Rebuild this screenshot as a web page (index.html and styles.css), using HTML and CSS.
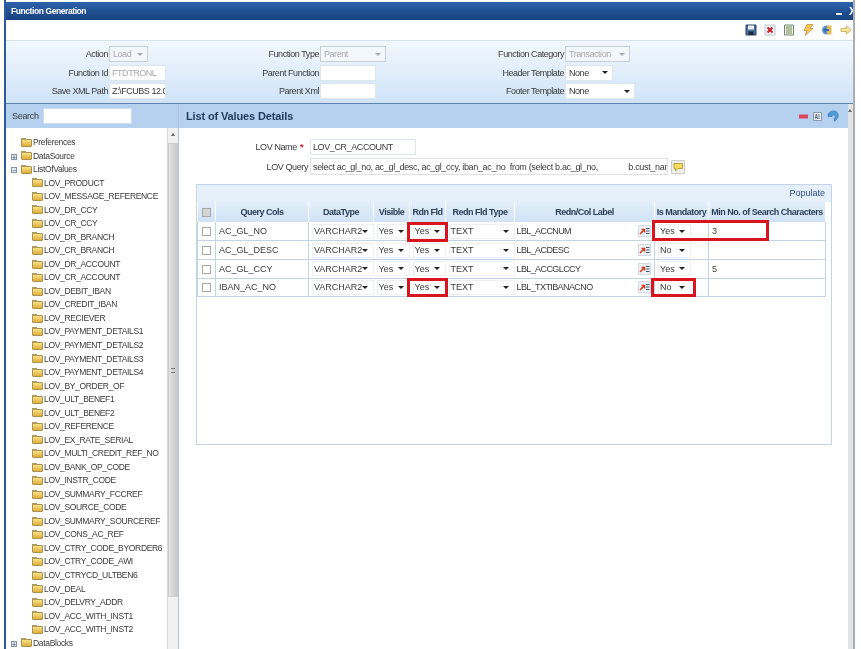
FILE: index.html
```html
<!DOCTYPE html>
<html lang="en">
<head>
  <meta charset="UTF-8" />
  <title>Function Generation</title>
  <link rel="stylesheet" href="styles.css">
</head>
<body>
  <div class="ventana">
    <div class="titulo">
      <span>Function Generation</span>
      <span class="titulo-btns"><i class="min"></i><b>X</b></span>
    </div>

    <div class="toolbar">
      <svg viewBox="0 0 12 12"><path d="M1 1h10v10H1z" fill="#4a6f9c" stroke="#2b4464"/><path d="M3 1.500h6v4H3z" fill="#e8eef5"/><path d="M3.500 7.500h5v3.500h-5z" fill="#1d2a3a"/></svg>
      <svg viewBox="0 0 12 12"><path d="M1 1h10v10H1z" fill="#f3f3f3" stroke="#b9c4d0"/><path d="M3.500 3.500l5 5m0-5l-5 5" stroke="#c8202c" stroke-width="2"/></svg>
      <svg viewBox="0 0 12 12"><path d="M1.500 1h9v10h-9z" fill="#eef2e2" stroke="#6f8a78"/><path d="M3 3h6M3 5h6M3 7h6M3 9h6" stroke="#7a8c50"/></svg>
      <svg viewBox="0 0 12 12"><path d="M5 0.500h6L8 4.500h3L3 11.500l2-5H2z" fill="#f4c65a" stroke="#b8862a" stroke-width=".7"/></svg>
      <svg viewBox="0 0 12 12"><circle cx="5.500" cy="6" r="4.500" fill="#5f93cf"/><path d="M6 1.500h4.500v9H6z" fill="#e6b94f"/><path d="M2 6l3-2.500v1.500h3v2H5v1.500z" fill="#2f6cb5"/></svg>
      <svg viewBox="0 0 12 12"><path d="M1 4.500h5.500V2L11 6l-4.500 4V7.500H1z" fill="#f6e7a0" stroke="#c9a94a" stroke-width=".8"/></svg>
    </div>

    <div class="cabecera">
      <label>Action</label><div class="sel off s-39"><span>Load</span></div>
      <label>Function Type</label><div class="sel off s-66"><span>Parent</span></div>
      <label>Function Category</label><div class="sel off s-65"><span>Transaction</span></div>

      <label>Function Id</label><div class="campo off">FTDTRONL</div>
      <label>Parent Function</label><div class="campo s-56"></div>
      <label>Header Template</label><div class="sel s-48"><span>None</span></div>

      <label>Save XML Path</label><div class="campo">Z:\FCUBS 12.0</div>
      <label>Parent Xml</label><div class="campo s-56"></div>
      <label>Footer Template</label><div class="sel s-70"><span>None</span></div>
    </div>

    <div class="cuerpo">
      <div class="lateral">
        <div class="buscar">Search <div class="campo buscar-campo"></div></div>
        <div class="arbol-wrap">
          <div class="arbol">
            <div class="nodo"><i class="carpeta"></i>Preferences</div>
            <div class="nodo"><i class="exp">+</i><i class="carpeta"></i>DataSource</div>
            <div class="nodo"><i class="exp">−</i><i class="carpeta"></i>ListOfValues</div>
            <div class="hoja"><i class="carpeta"></i>LOV_PRODUCT</div>
            <div class="hoja"><i class="carpeta"></i>LOV_MESSAGE_REFERENCE</div>
            <div class="hoja"><i class="carpeta"></i>LOV_DR_CCY</div>
            <div class="hoja"><i class="carpeta"></i>LOV_CR_CCY</div>
            <div class="hoja"><i class="carpeta"></i>LOV_DR_BRANCH</div>
            <div class="hoja"><i class="carpeta"></i>LOV_CR_BRANCH</div>
            <div class="hoja"><i class="carpeta"></i>LOV_DR_ACCOUNT</div>
            <div class="hoja"><i class="carpeta"></i>LOV_CR_ACCOUNT</div>
            <div class="hoja"><i class="carpeta"></i>LOV_DEBIT_IBAN</div>
            <div class="hoja"><i class="carpeta"></i>LOV_CREDIT_IBAN</div>
            <div class="hoja"><i class="carpeta"></i>LOV_RECIEVER</div>
            <div class="hoja"><i class="carpeta"></i>LOV_PAYMENT_DETAILS1</div>
            <div class="hoja"><i class="carpeta"></i>LOV_PAYMENT_DETAILS2</div>
            <div class="hoja"><i class="carpeta"></i>LOV_PAYMENT_DETAILS3</div>
            <div class="hoja"><i class="carpeta"></i>LOV_PAYMENT_DETAILS4</div>
            <div class="hoja"><i class="carpeta"></i>LOV_BY_ORDER_OF</div>
            <div class="hoja"><i class="carpeta"></i>LOV_ULT_BENEF1</div>
            <div class="hoja"><i class="carpeta"></i>LOV_ULT_BENEF2</div>
            <div class="hoja"><i class="carpeta"></i>LOV_REFERENCE</div>
            <div class="hoja"><i class="carpeta"></i>LOV_EX_RATE_SERIAL</div>
            <div class="hoja"><i class="carpeta"></i>LOV_MULTI_CREDIT_REF_NO</div>
            <div class="hoja"><i class="carpeta"></i>LOV_BANK_OP_CODE</div>
            <div class="hoja"><i class="carpeta"></i>LOV_INSTR_CODE</div>
            <div class="hoja"><i class="carpeta"></i>LOV_SUMMARY_FCCREF</div>
            <div class="hoja"><i class="carpeta"></i>LOV_SOURCE_CODE</div>
            <div class="hoja"><i class="carpeta"></i>LOV_SUMMARY_SOURCEREF</div>
            <div class="hoja"><i class="carpeta"></i>LOV_CONS_AC_REF</div>
            <div class="hoja"><i class="carpeta"></i>LOV_CTRY_CODE_BYORDER6</div>
            <div class="hoja"><i class="carpeta"></i>LOV_CTRY_CODE_AWI</div>
            <div class="hoja"><i class="carpeta"></i>LOV_CTRYCD_ULTBEN6</div>
            <div class="hoja"><i class="carpeta"></i>LOV_DEAL</div>
            <div class="hoja"><i class="carpeta"></i>LOV_DELVRY_ADDR</div>
            <div class="hoja"><i class="carpeta"></i>LOV_ACC_WITH_INST1</div>
            <div class="hoja"><i class="carpeta"></i>LOV_ACC_WITH_INST2</div>
            <div class="nodo"><i class="exp">+</i><i class="carpeta"></i>DataBlocks</div>
          </div>
          <div class="scroll">
            <div class="flecha"></div>
            <div class="thumb"><span></span></div>
          </div>
        </div>
      </div>

      <div class="principal">
        <div class="contenido">
          <div class="banda">
            <h2>List of Values Details</h2>
            <div class="banda-iconos">
              <svg width="9" height="5" viewBox="0 0 9 5"><path d="M0 0.500h9v4H0z" fill="#d8485a"/></svg>
              <svg width="9" height="9" viewBox="0 0 9 9"><path d="M.5.500h8v8h-8z" fill="#eef3f8" stroke="#8a98a8"/><path d="M2 7l1.300-5L4.600 7M2.500 5.500h1.600M6 2v5" fill="none" stroke="#47586c" stroke-width=".8"/></svg>
              <svg width="12" height="12" viewBox="0 0 12 12"><path d="M1 4.500C2 1.500 6 0 9 1.500c2.500 1.500 3 5 1 7.500L7.500 11.500 7 8.500c1.200-.8 1.500-2.500.5-3.300C6.500 4.500 5.500 5 5 6.500H1z" fill="#4f9ad8" stroke="#2a6aa8" stroke-width=".5"/></svg>
            </div>
          </div>

          <div class="detalle">
            <div class="fila-lov">
              <label>LOV Name <b>*</b></label>
              <div class="campo s-106">LOV_CR_ACCOUNT</div>
            </div>
            <div class="fila-lov">
              <label>LOV Query</label>
              <div class="campo consulta">select ac_gl_no, ac_gl_desc, ac_gl_ccy, iban_ac_no&nbsp; from (select b.ac_gl_no,&nbsp;&nbsp;&nbsp;&nbsp;&nbsp;&nbsp;&nbsp;&nbsp;&nbsp;&nbsp;&nbsp;&nbsp;&nbsp;&nbsp;b.cust_name</div>
              <svg class="globo" width="14" height="14" viewBox="0 0 14 14"><path d="M.5.500h13v13H.5z" fill="#f0f0e8" stroke="#ccc"/><path d="M3 3.500h8.500v5H7L4.500 11V8.500H3z" fill="#f7dc5c" stroke="#a8902c" stroke-width=".8"/></svg>
            </div>

            <div class="panel">
              <div class="panel-top"><a>Populate</a></div>
              <div class="tabla-wrap">
                <table class="tabla">
                  <thead>
                    <tr>
                      <th class="c-check"><i class="check gris"></i></th>
                      <th class="c-cols">Query Cols</th>
                      <th class="c-tipo">DataType</th>
                      <th class="c-vis">Visible</th>
                      <th class="c-rdn">Rdn Fld</th>
                      <th class="c-rtipo">Redn Fld Type</th>
                      <th class="c-label">Redn/Col Label</th>
                      <th class="c-man">Is Mandatory</th>
                      <th class="c-min">Min No. of Search Characters</th>
                    </tr>
                  </thead>
                  <tbody>
                    <tr>
                      <td><i class="check"></i></td>
                      <td>AC_GL_NO</td>
                      <td><div class="sel plano"><span>VARCHAR2</span></div></td>
                      <td><div class="sel plano"><span>Yes</span></div></td>
                      <td><div class="sel plano"><span>Yes</span></div></td>
                      <td><div class="sel plano"><span>TEXT</span></div></td>
                      <td><div class="etiqueta">LBL_ACCNUM<svg class="lista" viewBox="0 0 13 12"><path d="M.5.500h12v11H.5z" fill="#eef1f5" stroke="#d3d9e0"/><path d="M2 9l3.500-3.500M3.500 4.500h3v3" fill="none" stroke="#d23a1e" stroke-width="1.500"/><path d="M8 3.500h3.500M8 6h3.500M8 8.500h3.500" stroke="#3a5878"/></svg></div></td>
                      <td><div class="sel plano s-33"><span>Yes</span></div></td>
                      <td>3</td>
                    </tr>
                    <tr>
                      <td><i class="check"></i></td>
                      <td>AC_GL_DESC</td>
                      <td><div class="sel plano"><span>VARCHAR2</span></div></td>
                      <td><div class="sel plano"><span>Yes</span></div></td>
                      <td><div class="sel plano"><span>Yes</span></div></td>
                      <td><div class="sel plano"><span>TEXT</span></div></td>
                      <td><div class="etiqueta">LBL_ACDESC<svg class="lista" viewBox="0 0 13 12"><path d="M.5.500h12v11H.5z" fill="#eef1f5" stroke="#d3d9e0"/><path d="M2 9l3.500-3.500M3.500 4.500h3v3" fill="none" stroke="#d23a1e" stroke-width="1.500"/><path d="M8 3.500h3.500M8 6h3.500M8 8.500h3.500" stroke="#3a5878"/></svg></div></td>
                      <td><div class="sel plano s-33"><span>No</span></div></td>
                      <td></td>
                    </tr>
                    <tr>
                      <td><i class="check"></i></td>
                      <td>AC_GL_CCY</td>
                      <td><div class="sel plano"><span>VARCHAR2</span></div></td>
                      <td><div class="sel plano"><span>Yes</span></div></td>
                      <td><div class="sel plano"><span>Yes</span></div></td>
                      <td><div class="sel plano"><span>TEXT</span></div></td>
                      <td><div class="etiqueta">LBL_ACCGLCCY<svg class="lista" viewBox="0 0 13 12"><path d="M.5.500h12v11H.5z" fill="#eef1f5" stroke="#d3d9e0"/><path d="M2 9l3.500-3.500M3.500 4.500h3v3" fill="none" stroke="#d23a1e" stroke-width="1.500"/><path d="M8 3.500h3.500M8 6h3.500M8 8.500h3.500" stroke="#3a5878"/></svg></div></td>
                      <td><div class="sel plano s-33"><span>Yes</span></div></td>
                      <td>5</td>
                    </tr>
                    <tr>
                      <td><i class="check"></i></td>
                      <td>IBAN_AC_NO</td>
                      <td><div class="sel plano"><span>VARCHAR2</span></div></td>
                      <td><div class="sel plano"><span>Yes</span></div></td>
                      <td><div class="sel plano"><span>Yes</span></div></td>
                      <td><div class="sel plano"><span>TEXT</span></div></td>
                      <td><div class="etiqueta">LBL_TXTIBANACNO<svg class="lista" viewBox="0 0 13 12"><path d="M.5.500h12v11H.5z" fill="#eef1f5" stroke="#d3d9e0"/><path d="M2 9l3.500-3.500M3.500 4.500h3v3" fill="none" stroke="#d23a1e" stroke-width="1.500"/><path d="M8 3.500h3.500M8 6h3.500M8 8.500h3.500" stroke="#3a5878"/></svg></div></td>
                      <td><div class="sel plano s-33"><span>No</span></div></td>
                      <td></td>
                    </tr>
                  </tbody>
                </table>
                <div class="marca m-rdn1"></div>
                <div class="marca m-rdn2"></div>
                <div class="marca m-man1"></div>
                <div class="marca m-man2"></div>
              </div>
            </div>
          </div>
        </div>
        <div class="scroll-der"><div class="flecha"></div></div>
      </div>
    </div>
  </div>
</body>
</html>
```

FILE: styles.css
```css
* {
  box-sizing: border-box;
  margin: 0;
  padding: 0;
}

html, body {
  height: 100%;
  overflow: hidden;
  background-color: #fff;
}

body {
  font-family: "Liberation Sans", Arial, sans-serif;
  font-size: 9px;
  letter-spacing: -0.3px;
  color: #3a3a3a;
}

i {
  font-style: normal;
}

.ventana {
  width: 851px;
  height: 649px;
  margin-left: 4px;
  padding-top: 2px;
  border-left: 2px solid #2c5c9e;
  border-right: 2px solid #a9aeb5;
  overflow: hidden;
  filter: blur(0.35px);
}

/* barra de titulo */
.titulo {
  height: 18px;
  padding-left: 5px;
  display: flex;
  align-items: center;
  justify-content: space-between;
  background: linear-gradient(#2d62ab, #17417f);
  color: #fff;
  font-size: 8.5px;
  font-weight: bold;
  letter-spacing: -0.42px;
}

.titulo-btns {
  display: flex;
  align-items: center;
  gap: 7px;
  font-size: 11px;
  margin-right: -3px;
}

.titulo-btns .min {
  width: 6px;
  height: 2px;
  margin-top: 5px;
  background-color: #e8eef6;
}

.toolbar {
  height: 21px;
  padding-right: 1px;
  display: flex;
  align-items: center;
  justify-content: flex-end;
  gap: 7px;
  background-color: #fff;
  border-bottom: 1px solid #d5e2f0;
}

.toolbar svg {
  width: 12px;
  height: 12px;
}

/* cabecera del formulario */
.cabecera {
  height: 63px;
  padding-top: 5px;
  display: grid;
  grid-template-columns: 103px 57px 154px 66px 179px 70px;
  grid-auto-rows: 18.5px;
  background: linear-gradient(#f2f8fe, #cfe3f8);
  border-bottom: 1px solid #5f84ac;
  letter-spacing: -0.45px;
}

.cabecera label {
  text-align: right;
  padding-right: 1px;
  line-height: 16px;
}

.campo {
  height: 16px;
  line-height: 15px;
  padding-left: 2px;
  background-color: #fff;
  border: 1px solid #dfe5ec;
  white-space: nowrap;
  overflow: hidden;
}

.off {
  color: #aaa;
}

.sel {
  height: 16px;
  padding: 0 4px 0 3px;
  display: flex;
  align-items: center;
  justify-content: space-between;
  background-color: #fff;
  border: 1px solid #dfe5ec;
}

.sel::after {
  content: "";
  border-left: 3px solid transparent;
  border-right: 3px solid transparent;
  border-top: 3px solid #222;
}

.sel.off {
  background-color: #f2f7fc;
  border-color: #c6cfd8;
}

.sel.off::after {
  border-top-color: #aaa;
}

.s-33 { width: 33px; }
.s-39 { width: 39px; }
.s-48 { width: 48px; }
.s-56 { width: 56px; }
.s-65 { width: 65px; }
.s-66 { width: 66px; }
.s-70 { width: 70px; }
.s-106 { width: 106px; }

/* cuerpo */
.cuerpo {
  display: flex;
  height: 545px;
}

.lateral {
  width: 173px;
  flex: none;
  border-right: 1px solid #b4c4d6;
}

.buscar {
  height: 24px;
  padding-left: 6px;
  display: flex;
  align-items: center;
  gap: 4px;
  background-color: #b6d1ef;
}

.buscar-campo {
  width: 89px;
  border-color: #c9dcf2;
}

.arbol-wrap {
  display: flex;
  height: 521px;
  background-color: #fff;
}

.arbol {
  flex: 1;
  padding-top: 8px;
  overflow: hidden;
  font-size: 8.5px;
  letter-spacing: -0.33px;
}

.nodo, .hoja {
  height: 13.54px;
  line-height: 13.54px;
  display: flex;
  align-items: center;
  white-space: nowrap;
  position: relative;
}

.nodo {
  padding-left: 15px;
}

.hoja {
  padding-left: 26px;
}

.carpeta {
  position: relative;
  width: 11px;
  height: 8px;
  margin-right: 1px;
  flex: none;
  background: linear-gradient(#f8e288, #e0ad38);
  border: 1px solid #a8924f;
  border-radius: 1px;
}

.carpeta::before {
  content: "";
  position: absolute;
  left: -1px;
  top: -2px;
  width: 5px;
  height: 2px;
  background-color: #b09a5c;
}

.exp {
  position: absolute;
  left: 5px;
  top: 4px;
  width: 6px;
  height: 6px;
  line-height: 5px;
  text-align: center;
  font-size: 7px;
  letter-spacing: 0;
  color: #3b4a5c;
  background-color: #e6ecf3;
  border: 1px solid #8494a6;
}

.scroll {
  width: 11px;
  flex: none;
  background-color: #f1f1f1;
  border-left: 1px solid #d8d8d8;
}

.flecha {
  height: 15px;
  position: relative;
}

.flecha::after {
  content: "";
  position: absolute;
  left: 3px;
  top: 5px;
  border-left: 2px solid transparent;
  border-right: 2px solid transparent;
  border-bottom: 3px solid #666;
}

.thumb {
  height: 454px;
  display: flex;
  align-items: center;
  justify-content: center;
  background: linear-gradient(90deg, #e2e2e2, #c8c8c8);
  border: 1px solid #cfcfcf;
}

.thumb span {
  width: 4px;
  height: 5px;
  border-top: 1px solid #777;
  border-bottom: 1px solid #777;
}

/* zona principal */
.principal {
  width: 674px;
  flex: none;
  display: flex;
}

.contenido {
  flex: 1;
}

.banda {
  height: 24px;
  padding: 0 9px 0 7px;
  display: flex;
  align-items: center;
  justify-content: space-between;
  background-color: #b6d1ef;
}

.banda h2 {
  font-size: 11px;
  letter-spacing: -0.13px;
  color: #1f3a5c;
}

.banda-iconos {
  display: flex;
  align-items: center;
  gap: 5px;
}

.detalle {
  height: 521px;
  padding: 11px 0 0 17px;
  background-color: #fff;
}

.fila-lov {
  display: flex;
  align-items: center;
  margin-bottom: 3px;
  letter-spacing: -0.4px;
}

.fila-lov label {
  width: 113px;
  padding-right: 1px;
  text-align: right;
}

.fila-lov label b {
  color: #d01818;
  margin-left: 1px;
  margin-right: 5px;
}

.fila-lov .campo {
  margin-left: 1px;
}

.consulta {
  width: 358px;
  height: 17px;
  line-height: 16px;
  border-color: #e0e0e0;
  letter-spacing: -0.33px;
}

.globo {
  margin-left: 3px;
}

.panel {
  width: 636px;
  height: 261px;
  margin-top: 9px;
  background-color: #fff;
  border: 1px solid #c3d4e6;
}

.panel-top {
  height: 17px;
  padding-right: 6px;
  line-height: 17px;
  text-align: right;
  background-color: #e6f0fb;
}

.panel-top a {
  color: #2c4a9c;
  letter-spacing: 0;
}

.tabla-wrap {
  position: relative;
}

.tabla {
  width: 628px;
  border-collapse: collapse;
  table-layout: fixed;
  letter-spacing: 0;
}

.tabla th {
  height: 20px;
  font-size: 9px;
  letter-spacing: -0.5px;
  color: #2a3f55;
  white-space: nowrap;
  background: linear-gradient(#e2eefa, #d0e2f6);
  border-right: 1px solid #fff;
}

.tabla td {
  height: 18.7px;
  padding-left: 3px;
  white-space: nowrap;
  border-bottom: 1px solid #c3d4e6;
}

.tabla td:first-child {
  padding-left: 0;
  text-align: center;
  border-left: 1px solid #c3d4e6;
}

.tabla td:nth-child(-n+2),
.tabla td:nth-child(n+7) {
  border-right: 1px solid #c3d4e6;
}

.c-check { width: 18px; }
.c-cols { width: 93px; }
.c-tipo { width: 65px; }
.c-vis { width: 36px; }
.c-rdn { width: 36px; }
.c-rtipo { width: 69px; }
.c-label { width: 140px; }
.c-man { width: 54px; }
.c-min { width: 117px; }

.check {
  display: inline-block;
  width: 9px;
  height: 9px;
  vertical-align: middle;
  background-color: #fff;
  border: 1px solid #a8a8a8;
}

.check.gris {
  background-color: #d4d4d4;
}

.sel.plano {
  height: 15px;
  padding: 0 5px 0 1px;
  border-color: #eef1f4;
}

.etiqueta {
  display: flex;
  align-items: center;
  justify-content: space-between;
  margin-left: -1px;
  padding-right: 3px;
  letter-spacing: -0.6px;
}

.lista {
  width: 13px;
  height: 12px;
}

/* recuadros rojos sobre la tabla */
.marca {
  position: absolute;
  border: 3px solid #d8141e;
}

.m-rdn1 { left: 210px; top: 20px; width: 41px; height: 20px; }
.m-rdn2 { left: 210px; top: 76px; width: 41px; height: 19px; }
.m-man1 { left: 455px; top: 18px; width: 117px; height: 21px; }
.m-man2 { left: 454px; top: 76px; width: 45px; height: 19px; }

.scroll-der {
  width: 5px;
  flex: none;
  background-color: #e4e4e4;
}

.scroll-der .flecha::after {
  left: 0;
}
```
